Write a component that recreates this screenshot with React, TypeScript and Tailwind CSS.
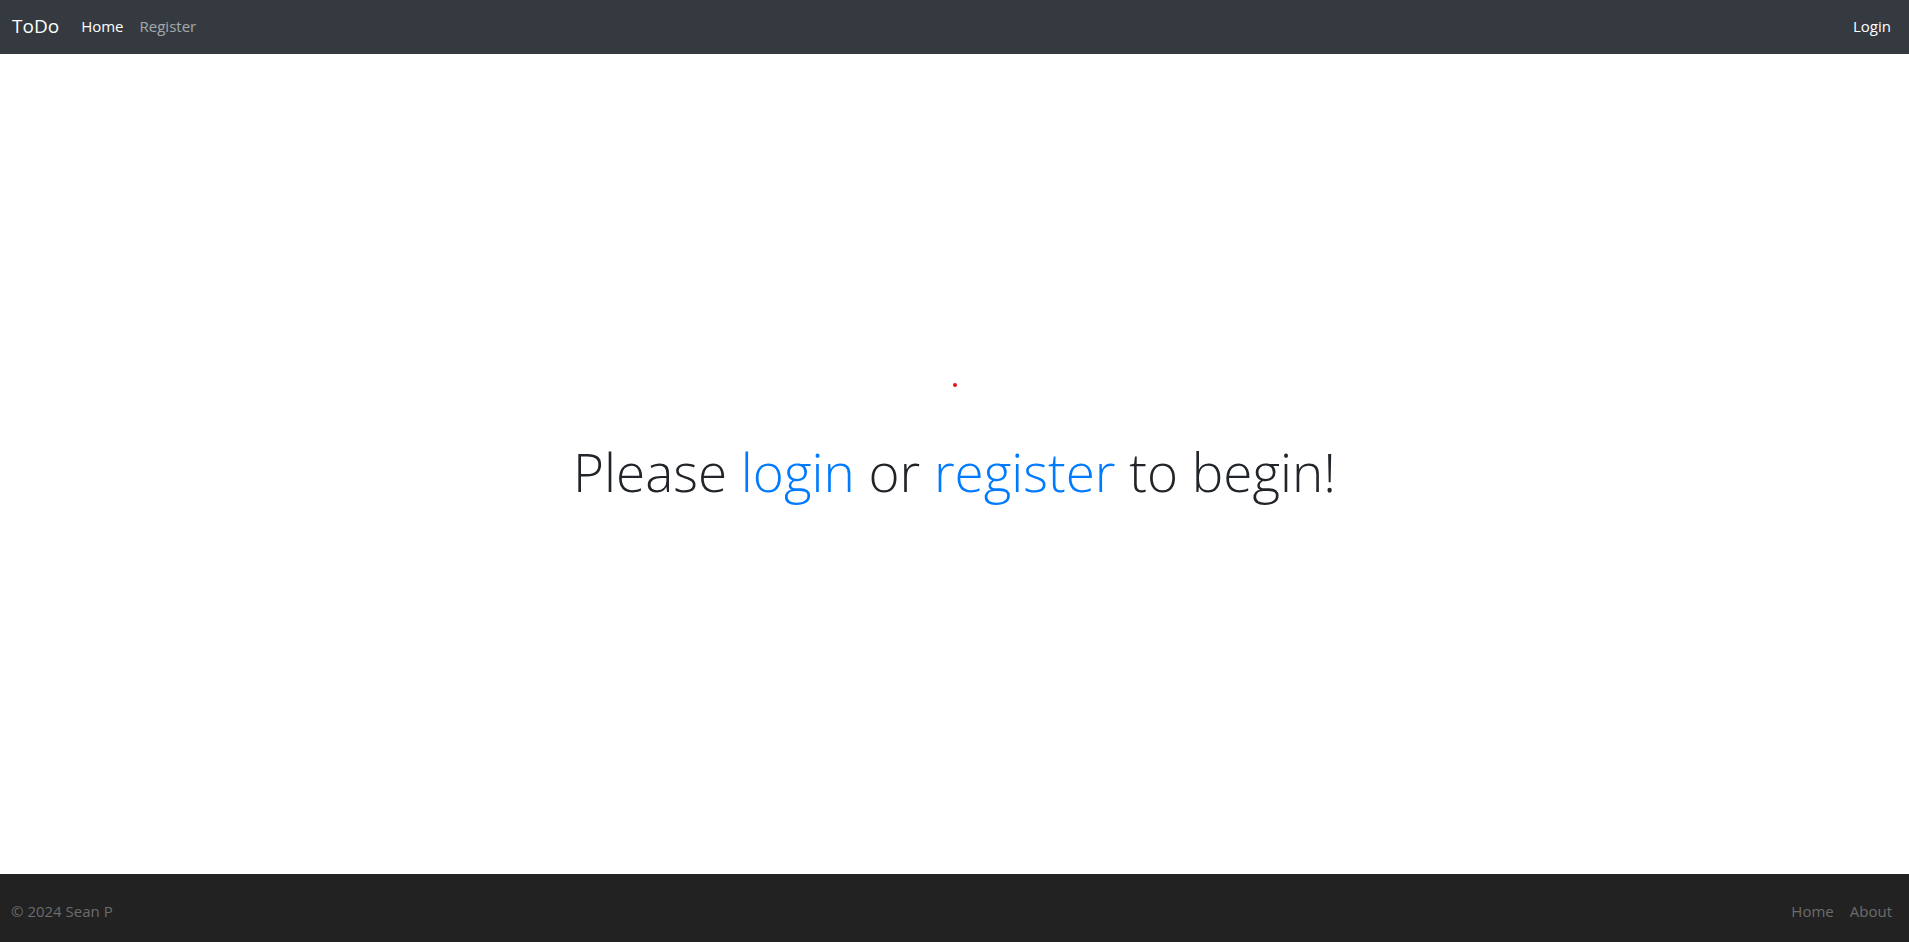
export default function App() {
  return (
    <div
      className="flex min-h-screen flex-col bg-white"
      style={{ fontFamily: '"Segoe UI", "Open Sans", "Liberation Sans", sans-serif' }}
    >
      <nav className="flex h-[54px] items-center justify-between bg-[#343a40] pb-[1px] pl-3 pr-[18px]">
        <div className="flex items-center">
          <span className="text-[19px] text-white">ToDo</span>
          <a href="#" className="ml-[22px] text-[15px] text-white">
            Home
          </a>
          <a href="#" className="ml-[16px] text-[15px] text-white/55">
            Register
          </a>
        </div>
        <a href="#" className="text-[15px] text-white">
          Login
        </a>
      </nav>

      <main className="flex flex-1 flex-col items-center pt-[329px]">
        <div className="h-[4px] w-[4px] rounded-full bg-[#e8101e]" />
        <h1 className="mt-[53px] text-[53px] font-light leading-[1.2] text-[#212529]">
          Please{" "}
          <a href="#" className="text-[#007bff]">
            login
          </a>{" "}
          or{" "}
          <a href="#" className="text-[#007bff]">
            register
          </a>{" "}
          to begin!
        </h1>
      </main>

      <footer className="flex h-[68px] items-center justify-between bg-[#222222] pl-[11px] pr-[17px] pt-[6px] text-[15px] text-[#6c6c6c]">
        <span>© 2024 Sean P</span>
        <div className="flex gap-4">
          <a href="#">Home</a>
          <a href="#">About</a>
        </div>
      </footer>
    </div>
  );
}
